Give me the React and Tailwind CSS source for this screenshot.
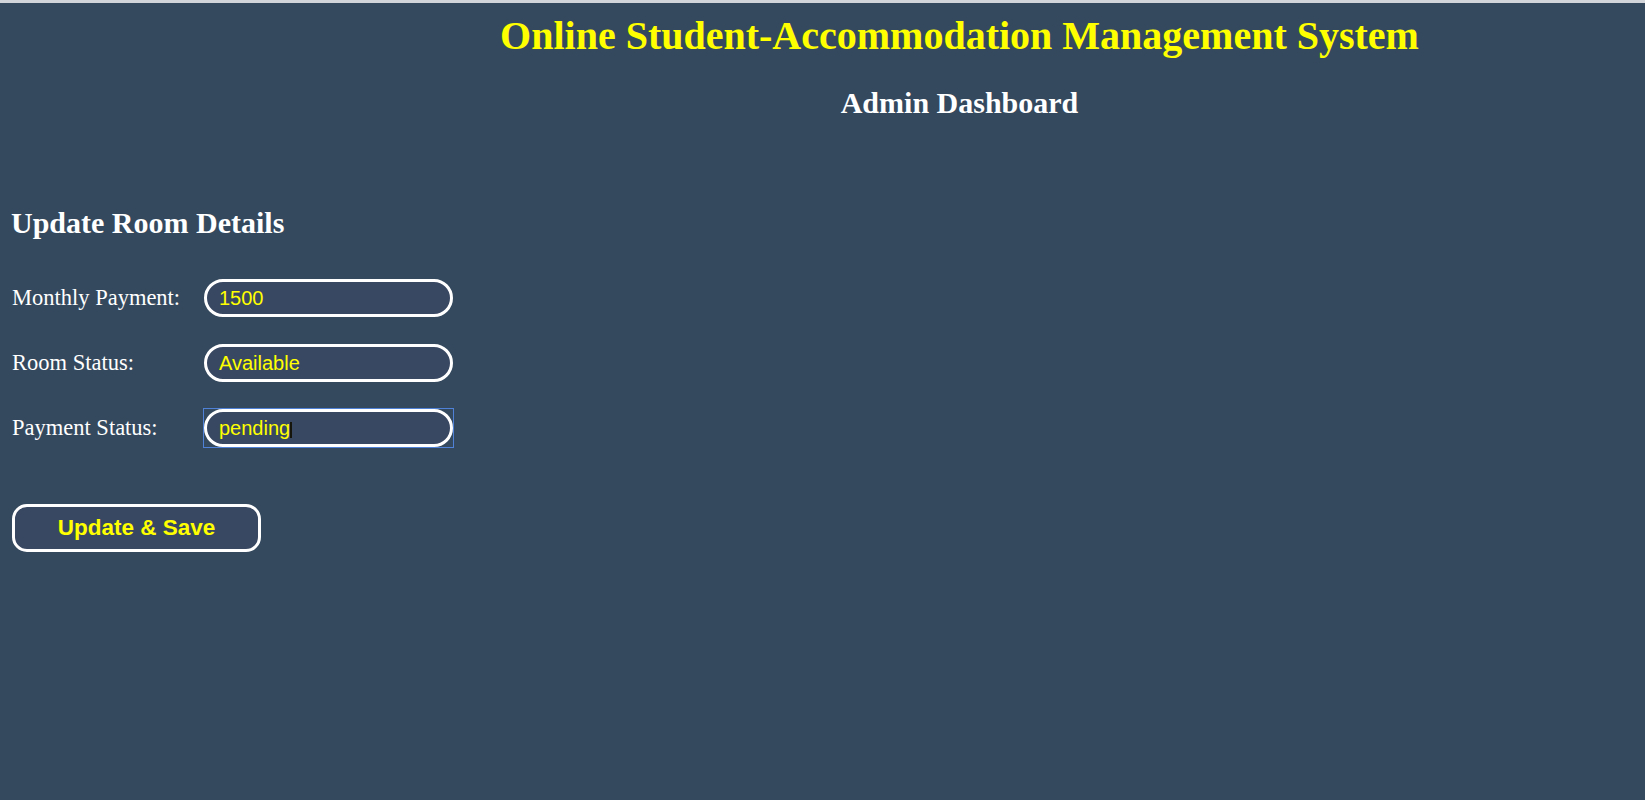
import React from 'react';

const fields = [
  { label: 'Monthly Payment:', value: '1500' },
  { label: 'Room Status:', value: 'Available' },
  { label: 'Payment Status:', value: 'pending', focused: true },
];

const serif = "font-['Liberation_Serif','Times_New_Roman',serif]";
const sans = "font-['Liberation_Sans',Arial,sans-serif]";

const App = () => {
  return (
    <div className="min-h-screen bg-[#34495e] text-white">
      {/* thin strip along the top edge */}
      <div className="h-[3px] bg-[#d2d5d9]" />

      <header className="ml-[274px] pt-[10px] text-center">
        <h1 className={`${serif} text-[40px] leading-[46px] font-bold text-[#ffff00]`}>
          Online Student-Accommodation Management System
        </h1>
        <h2 className={`${serif} mt-[27px] text-[30px] leading-[34px] font-bold text-white`}>
          Admin Dashboard
        </h2>
      </header>

      <section className="pl-3">
        <h2 className={`${serif} mt-[86px] -ml-px text-[30px] leading-[34px] font-bold text-white`}>
          Update Room Details
        </h2>

        <form className="mt-[39px]" onSubmit={(e) => e.preventDefault()}>
          <div className="flex flex-col gap-[27px]">
            {fields.map((f) => (
              <div key={f.label} className="flex items-center">
                <label className={`${serif} w-[192px] text-[22.5px] leading-[26px] text-white`}>
                  {f.label}
                </label>
                <div
                  className={`relative ${f.focused ? 'outline-[1.5px] outline-solid outline-[#4f82d6]' : ''}`}
                >
                  <input
                    readOnly
                    value={f.value}
                    className={`${sans} block w-[249px] h-[38px] rounded-full border-[3px] border-white bg-[#394862] pl-[12px] pr-3 text-[20px] text-[#ffff00] outline-none`}
                  />
                  {f.focused && (
                    <span className="absolute left-[86px] top-[13px] h-[16px] w-[1.5px] bg-[#15150c]" />
                  )}
                </div>
              </div>
            ))}
          </div>

          <button
            type="submit"
            className={`${sans} mt-[57px] block w-[249px] h-[48px] rounded-[15px] border-[3px] border-white bg-[#394862] text-[22.5px] font-bold text-[#ffff00]`}
          >
            Update &amp; Save
          </button>
        </form>
      </section>
    </div>
  );
};

export default App;
